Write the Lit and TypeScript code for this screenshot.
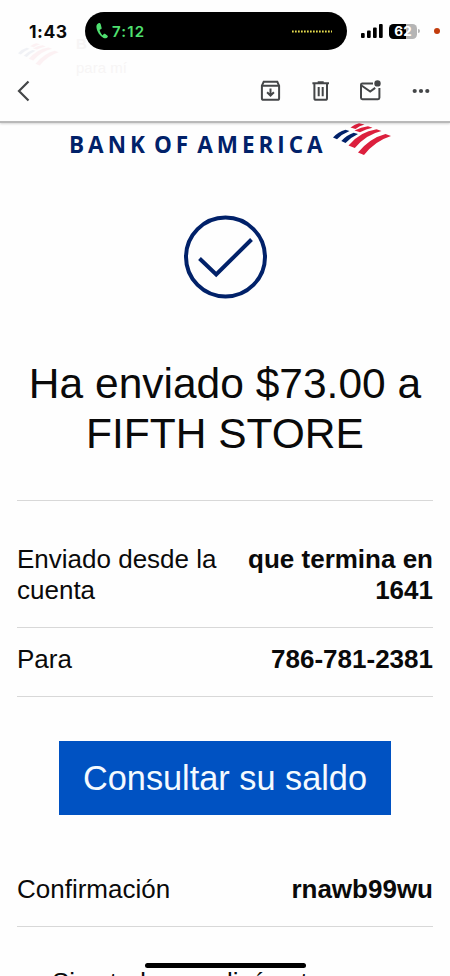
import { LitElement, html, css, svg, nothing } from 'lit';
import { customElement, property } from 'lit/decorators.js';

const FLAG = svg`
  <g fill="#012169">
    <path d="M0 14.5Q5 9 12.500 6.800L16.500 8Q9 11 4 16.300Z"/>
    <path d="M8.300 18Q13.500 12 20.700 9.700L25 11Q17.500 14.500 12.500 20Z"/>
  </g>
  <g fill="#dc1f3d">
    <path d="M17.500 4.500Q22 1.200 26 .3L31.500 1.600Q26.500 3 22.500 6Z"/>
    <path d="M21.500 7.600Q28 4 35 3.200L39.500 4.700Q33 6 27 9.300Z"/>
    <path d="M15.500 22.500Q27 8.500 43.500 6.200L48.500 8Q33 11.500 21.800 25Z"/>
    <path d="M25 29.500Q37 15 52.500 11L58 13Q42 18 31 32Z"/>
  </g>
`;

@customElement('status-bar')
export class StatusBar extends LitElement {
  static styles = css`
    :host {
      display: flex;
      align-items: center;
      height: 38px;
      padding-top: 12px;
      font-family: Inter, sans-serif;
    }

    .time {
      width: 56px;
      padding-left: 29px;
      font-size: 17.5px;
      font-weight: 700;
      letter-spacing: 0.5px;
    }

    .island {
      display: flex;
      align-items: center;
      width: 262px;
      height: 38px;
      box-sizing: border-box;
      padding: 0 14px 0 11px;
      border-radius: 19px;
      background: #000;
    }

    .call {
      flex: 1;
      margin-left: 4px;
      font-size: 15px;
      font-weight: 600;
      letter-spacing: 1.2px;
      color: #4fe070;
    }

    .signal {
      margin: 0 6px 0 14px;
    }

    .battery {
      display: flex;
      align-items: center;
      justify-content: center;
      width: 28px;
      height: 15px;
      border-radius: 4.5px;
      background: linear-gradient(90deg, #000 62%, #b5b5b5 62%);
      color: #fff;
      font-size: 13.5px;
      font-weight: 700;
    }

    .tip {
      width: 2px;
      height: 4px;
      margin-left: 1px;
      border-radius: 0 2px 2px 0;
      background: #b5b5b5;
    }

    .mic {
      width: 6px;
      height: 6px;
      margin-left: 14px;
      border-radius: 50%;
      background: #c23c0c;
    }
  `;

  render() {
    return html`
      <span class="time">1:43</span>
      <div class="island">
        <svg width="12" height="16" viewBox="0 0 12 16">
          <path fill="#4fe070" d="M2.6.2C1.300.6.4 2 .4 3.800c.3 4.700 3.600 9.300 7.200 11.200 1.600.8 3.400.2 4.100-1 .3-.6.1-1.100-.4-1.500L9.300 10.900c-.6-.4-1.200-.3-1.600.2l-.7.8c-.3.3-.6.3-.9 0C4.900 10.600 4.100 9 3.700 7.400c-.1-.4 0-.6.4-.8l.9-.4c.6-.3.8-.8.6-1.400L4.700 1.300C4.400.5 3.600-.1 2.600.2Z"/>
        </svg>
        <span class="call">7:12</span>
        <svg width="42" height="3" viewBox="0 0 42 3">
          <path d="M1 1.500H41" stroke="#e5dc4e" stroke-width="2" stroke-dasharray="1.700 1.300"/>
        </svg>
      </div>
      <svg class="signal" width="22" height="14" viewBox="0 0 22 14">
        <rect x="0" y="9" width="3.700" height="5" rx="1"/>
        <rect x="6" y="6.500" width="3.700" height="7.500" rx="1"/>
        <rect x="12" y="3.500" width="3.700" height="10.500" rx="1"/>
        <rect x="18" y="0" width="3.700" height="14" rx="1"/>
      </svg>
      <span class="battery">62</span>
      <span class="tip"></span>
      <span class="mic"></span>
    `;
  }
}

@customElement('mail-toolbar')
export class MailToolbar extends LitElement {
  static styles = css`
    :host {
      display: flex;
      align-items: center;
      height: 60px;
      padding: 11px 17px 0 16px;
      color: #444648;
    }

    .back {
      margin-right: auto;
    }

    .actions {
      display: flex;
      align-items: center;
      gap: 26px;
    }

    svg {
      display: block;
      fill: none;
      stroke: currentColor;
      stroke-width: 2;
    }

    .solid {
      fill: currentColor;
      stroke: none;
    }
  `;

  render() {
    return html`
      <svg class="back" width="14" height="22" viewBox="0 0 14 22">
        <path d="M12.500 1.500L3 11l9.500 9.500" stroke-width="2.200"/>
      </svg>
      <div class="actions">
        <svg width="24" height="24" viewBox="0 0 24 24">
          <path d="M2.900 6.600L4.700 2.800h13.600l1.800 3.800V19.200a1.600 1.600 0 0 1-1.600 1.600H4.500a1.600 1.600 0 0 1-1.600-1.600ZM2.900 6.800H20.100M11.500 9.500v7M8.100 13.300l3.400 3.400 3.400-3.400"/>
        </svg>
        <svg width="24" height="24" viewBox="0 0 24 24">
          <path d="M3.400 4.300H20M8.700 3.200h6M5.400 4.500V19.200a1.600 1.600 0 0 0 1.600 1.600h9.400a1.600 1.600 0 0 0 1.600-1.600V4.500M9.700 8v9.300M13.700 8v9.300"/>
        </svg>
        <svg width="24" height="24" viewBox="0 0 24 24">
          <path d="M14 4.400H3.400a1.400 1.400 0 0 0-1.400 1.400V18.800a1.400 1.400 0 0 0 1.400 1.400H19a1.400 1.400 0 0 0 1.400-1.400V9M2.500 6.500l8.700 6 5-3.600"/>
          <circle class="solid" cx="18.500" cy="4.400" r="3.200"/>
        </svg>
        <svg width="24" height="24" viewBox="0 0 24 24">
          <g class="solid">
            <circle cx="5.700" cy="12" r="2.100"/>
            <circle cx="12" cy="12" r="2.100"/>
            <circle cx="18.300" cy="12" r="2.100"/>
          </g>
        </svg>
      </div>
    `;
  }
}

@customElement('detail-row')
export class DetailRow extends LitElement {
  static styles = css`
    :host {
      display: flex;
      justify-content: space-between;
      gap: 20px;
      border-bottom: 1px solid #d8d8d8;
      font-size: 26px;
      line-height: 31px;
    }

    .label {
      width: 210px;
    }

    .value {
      width: 190px;
      text-align: right;
      font-weight: 700;
    }
  `;

  @property({ type: String })
  label = '';

  @property({ type: String })
  value = '';

  render() {
    return html`
      <span class="label">${this.label}</span>
      ${this.value ? html`<span class="value">${this.value}</span>` : nothing}
    `;
  }
}

@customElement('app-root')
export class AppRoot extends LitElement {
  static styles = css`
    :host {
      display: block;
      position: relative;
      height: 976px;
      overflow: hidden;
      background: #fefefe;
      color: #0a0a0a;
      font-family: 'Liberation Sans', Arial, sans-serif;
    }

    .header {
      position: relative;
      height: 123px;
      box-sizing: border-box;
      background: #fefefe;
      border-bottom: 2px solid #b9b9b9;
      box-shadow: 0 1px 2px rgba(0, 0, 0, 0.16);
    }

    /* Sender block fading out behind the header */
    .ghost {
      position: absolute;
      left: 18px;
      top: 32px;
      display: flex;
      gap: 16px;
      color: #f7f5f5;
      font-size: 15px;
      line-height: 24px;
    }

    .ghost svg {
      opacity: 0.05;
      margin-top: 11px;
    }

    .ghost b {
      display: block;
    }

    .header status-bar,
    .header mail-toolbar {
      position: relative;
    }

    .brand {
      display: flex;
      height: 37px;
      padding-left: 69px;
    }

    .brand-name {
      display: flex;
      gap: 5px;
      width: 264px;
      padding-top: 9px;
      font-family: 'Open Sans', sans-serif;
      font-size: 22.5px;
      font-weight: 700;
      line-height: 26px;
      letter-spacing: 4px;
      color: #012169;
      white-space: nowrap;
    }

    .check {
      display: block;
      margin: 55px auto 0 183px;
    }

    h1 {
      margin: 60px 0 0;
      font-size: 42.5px;
      font-weight: 400;
      line-height: 50px;
      text-align: center;
    }

    .details {
      margin: 41px 17px 0;
      border-top: 1px solid #d8d8d8;
    }

    .account {
      padding: 43px 0 21px;
    }

    .recipient {
      padding: 16px 0 21px;
    }

    .button {
      display: flex;
      align-items: center;
      justify-content: center;
      width: 332px;
      height: 74px;
      margin: 44px 0 0 59px;
      background: #0052c2;
      color: #f4faff;
      font-size: 34.3px;
    }

    .confirmation {
      margin: 0 17px;
      padding: 59px 0 21px;
    }

    .notice {
      margin: 40px 0 0 52px;
      font-size: 26px;
      line-height: 31px;
      white-space: nowrap;
    }

    .home-indicator {
      position: absolute;
      left: 145px;
      bottom: 8px;
      width: 161px;
      height: 5px;
      border-radius: 3px;
      background: #000;
    }
  `;

  render() {
    return html`
      <div class="header">
        <div class="ghost">
          <svg width="42" height="24" viewBox="0 0 60 34">${FLAG}</svg>
          <div><b>B</b>para mí</div>
        </div>
        <status-bar></status-bar>
        <mail-toolbar></mail-toolbar>
      </div>

      <div class="brand">
        <div class="brand-name"><span>BANK</span><span>OF</span><span>AMERICA</span></div>
        <svg width="60" height="34" viewBox="0 0 60 34">${FLAG}</svg>
      </div>

      <svg class="check" width="84" height="84" viewBox="0 0 84 84" fill="none" stroke="#012169" stroke-width="4">
        <circle cx="42.500" cy="42" r="39.500"/>
        <path d="M16.500 43.500L33.200 59.500L68.500 24.500"/>
      </svg>

      <h1>Ha enviado $73.00 a<br>FIFTH STORE</h1>

      <div class="details">
        <detail-row class="account" label="Enviado desde la cuenta" value="que termina en 1641"></detail-row>
        <detail-row class="recipient" label="Para" value="786-781-2381"></detail-row>
      </div>

      <div class="button">Consultar su saldo</div>

      <detail-row class="confirmation" label="Confirmación" value="rnawb99wu"></detail-row>
      <div class="notice">Si usted no realizó esta</div>

      <div class="home-indicator"></div>
    `;
  }
}

declare global {
  interface HTMLElementTagNameMap {
    'app-root': AppRoot;
    'status-bar': StatusBar;
    'mail-toolbar': MailToolbar;
    'detail-row': DetailRow;
  }
}
